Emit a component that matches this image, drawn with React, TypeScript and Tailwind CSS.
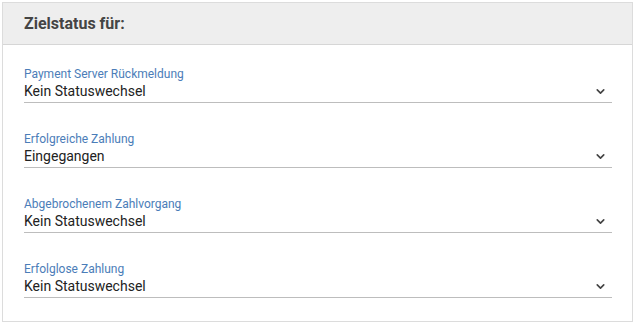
import { ChevronDown } from 'lucide-react'

const fields = [
  { label: 'Payment Server Rückmeldung', value: 'Kein Statuswechsel' },
  { label: 'Erfolgreiche Zahlung', value: 'Eingegangen' },
  { label: 'Abgebrochenem Zahlvorgang', value: 'Kein Statuswechsel' },
  { label: 'Erfolglose Zahlung', value: 'Kein Statuswechsel' },
]

export default function App() {
  return (
    <div className="w-[636px] h-[324px] bg-white p-[2px] font-['Roboto',sans-serif]">
      <div className="w-[631px] h-[320px] border border-[#dcdcdc] bg-white">
        <div className="h-[42px] bg-[#eeeeee] border-b border-[#d6d6d6] flex items-center px-[21px]">
          <h2 className="text-[16px] font-bold text-[#444444]">Zielstatus für:</h2>
        </div>
        <div className="pt-[22px] pl-[21px] pr-[20px] flex flex-col gap-[29px]">
          {fields.map((f) => (
            <div key={f.label}>
              <div className="text-[12px] leading-[14px] text-[#4b7db8]">{f.label}</div>
              <div className="flex items-center justify-between h-[22px] border-b border-[#bdbdbd]">
                <span className="text-[14px] text-[#222222]">{f.value}</span>
                <ChevronDown className="w-[13px] h-[13px] mr-[5px] text-[#444444]" strokeWidth={3} />
              </div>
            </div>
          ))}
        </div>
      </div>
    </div>
  )
}
